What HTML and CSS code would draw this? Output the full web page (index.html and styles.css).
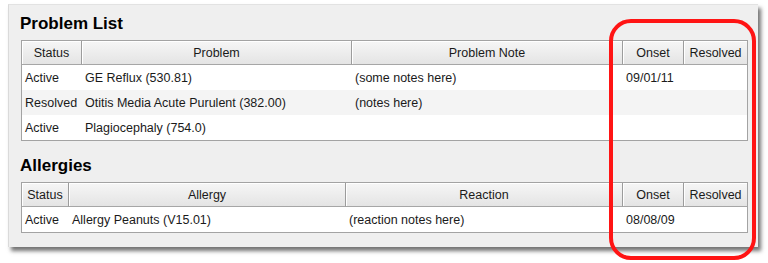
FILE: index.html
```html
<!DOCTYPE html>
<html lang="en">
<head>
    <meta charset="UTF-8">
    <title>Problem List</title>
    <link rel="stylesheet" href="styles.css">
</head>
<body>
    <div class="panel">
        <!-- Problems -->
        <h2 class="section-title">Problem List</h2>
        <div class="grid problems">
            <div class="head">Status</div>
            <div class="head">Problem</div>
            <div class="head">Problem Note</div>
            <div class="head">Onset</div>
            <div class="head">Resolved</div>

            <div class="cell">Active</div>
            <div class="cell">GE Reflux (530.81)</div>
            <div class="cell">(some notes here)</div>
            <div class="cell">09/01/11</div>
            <div class="cell"></div>

            <div class="cell alt">Resolved</div>
            <div class="cell alt">Otitis Media Acute Purulent (382.00)</div>
            <div class="cell alt">(notes here)</div>
            <div class="cell alt"></div>
            <div class="cell alt"></div>

            <div class="cell">Active</div>
            <div class="cell">Plagiocephaly (754.0)</div>
            <div class="cell"></div>
            <div class="cell"></div>
            <div class="cell"></div>
        </div>

        <!-- Allergies -->
        <h2 class="section-title">Allergies</h2>
        <div class="grid allergies">
            <div class="head">Status</div>
            <div class="head">Allergy</div>
            <div class="head">Reaction</div>
            <div class="head">Onset</div>
            <div class="head">Resolved</div>

            <div class="cell">Active</div>
            <div class="cell">Allergy Peanuts (V15.01)</div>
            <div class="cell">(reaction notes here)</div>
            <div class="cell">08/08/09</div>
            <div class="cell"></div>
        </div>
    </div>

    <div class="callout"></div>
</body>
</html>
```

FILE: styles.css
```css
body {
    margin: 0;
    padding: 4px 0 0 8px;
    background: #fff;
    color: #1a1a1a;
    font-family: 'Liberation Sans', Arial, sans-serif;
    font-size: 12.5px;
    position: relative;
    height: 263px;
    box-sizing: border-box;
    overflow: hidden;
}

.panel {
    width: 750px;
    height: 243px;
    box-sizing: border-box;
    padding: 9px 10px 0 11px;
    background: #efefef;
    border-top: 1px solid #e2e2e2;
    border-left: 1px solid #dadada;
    box-shadow: 3px 4px 4px rgba(0, 0, 0, 0.55);
}

.section-title {
    margin: 0;
    font-size: 17px;
    line-height: 20px;
    font-weight: bold;
    color: #000;
}

.section-title + .grid {
    margin-top: 6px;
}

.grid + .section-title {
    margin-top: 15px;
}

/* table-like grid */
.grid {
    display: grid;
    margin-left: 1px;
    width: 727px;
    box-sizing: border-box;
    border: 1px solid #a3a3a3;
    background: #fff;
}

.problems {
    grid-template-columns: 60px 270px 271px 61px 63px;
}

.allergies {
    grid-template-columns: 47px 277px 277px 61px 63px;
}

.head {
    height: 24px;
    box-sizing: border-box;
    display: flex;
    align-items: center;
    justify-content: center;
    background: linear-gradient(#f6f6f6, #e4e4e4);
    border-right: 1px solid #9c9c9c;
    border-bottom: 1px solid #a6a6a6;
    box-shadow: inset 1px 1px 0 #fff;
    white-space: nowrap;
}

.head:nth-child(5) {
    border-right: 0;
}

.cell {
    height: 25px;
    display: flex;
    align-items: center;
    padding-left: 3px;
    white-space: nowrap;
}

.cell.alt {
    background: #f4f4f4;
}

/* red annotation ring over the date columns */
.callout {
    position: absolute;
    left: 609px;
    top: 19px;
    width: 147px;
    height: 241px;
    box-sizing: border-box;
    border: 4px solid #ff1414;
    border-radius: 22px;
}
```
